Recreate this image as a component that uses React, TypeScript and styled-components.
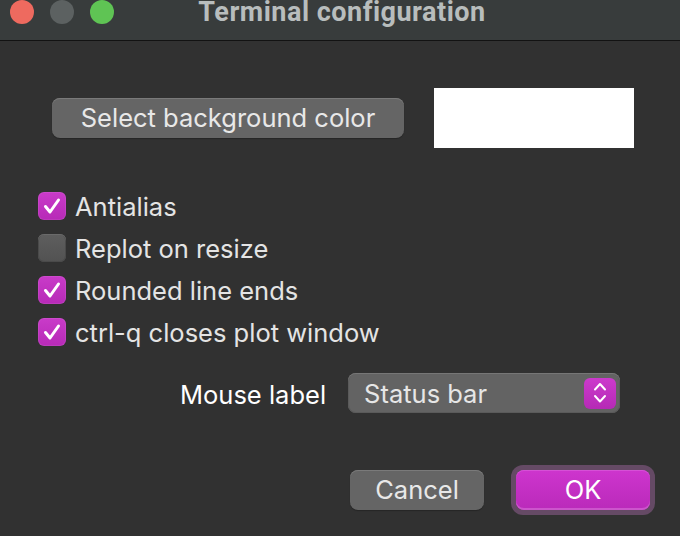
import React, { useState } from "react";
import styled, { createGlobalStyle } from "styled-components";

const Global = createGlobalStyle`
  html, body { margin: 0; padding: 0; background: #313131; }
  body { font-family: "Inter", "Liberation Sans", sans-serif; }
  * { box-sizing: border-box; }
`;

const Window = styled.div`
  width: 680px;
  height: 536px;
  background: #313131;
  display: flex;
  flex-direction: column;
  overflow: hidden;
`;

const TitleBar = styled.div`
  height: 41px;
  flex: none;
  background: #383c3c;
  border-bottom: 1px solid #121212;
  display: flex;
  align-items: flex-start;
  position: relative;
`;

const Lights = styled.div`
  display: flex;
  gap: 16px;
  padding-left: 10px;
`;

const Light = styled.span<{ $color: string }>`
  width: 24px;
  height: 24px;
  border-radius: 50%;
  background: ${(p) => p.$color};
`;

const Title = styled.div`
  position: absolute;
  left: 0;
  right: 0;
  top: 0;
  line-height: 24px;
  text-align: center;
  padding-left: 4px;
  font-family: "Roboto", "Liberation Sans", sans-serif;
  font-weight: 700;
  font-size: 27px;
  color: #b8bdbd;
  letter-spacing: 0.5px;
`;

const Content = styled.div`
  display: flex;
  flex-direction: column;
`;

const ColorRow = styled.div`
  display: flex;
  align-items: center;
  gap: 30px;
  padding-left: 52px;
  margin-top: 47px;
  height: 60px;
`;

const PushButton = styled.button<{ $width: number }>`
  width: ${(p) => p.$width}px;
  height: 40px;
  border-radius: 8px;
  border: none;
  background: #656565;
  box-shadow: inset 0 1px 0 #7a7a7a, 0 1px 1px rgba(0, 0, 0, 0.25);
  color: #e8e8e8;
  font-family: "Inter", "Liberation Sans", sans-serif;
  font-size: 25.5px;
  padding: 0;
  padding-bottom: 1px;
  display: flex;
  align-items: center;
  justify-content: center;
`;

const Swatch = styled.div`
  width: 200px;
  height: 60px;
  background: #ffffff;
`;

const CheckList = styled.div`
  display: flex;
  flex-direction: column;
  gap: 14px;
  padding-left: 38px;
  margin-top: 44px;
`;

const CheckRow = styled.label`
  display: flex;
  align-items: center;
  gap: 9px;
  height: 28px;
  color: #e4e4e4;
  font-size: 25.5px;
  cursor: default;
`;

const Box = styled.span<{ $on: boolean }>`
  width: 28px;
  height: 28px;
  border-radius: 6px;
  flex: none;
  display: flex;
  align-items: center;
  justify-content: center;
  background: ${(p) =>
    p.$on
      ? "linear-gradient(#c93bc9, #b72ab7)"
      : "linear-gradient(#5e5e5e, #525252)"};
  box-shadow: ${(p) =>
    p.$on
      ? "inset 0 0 0 1px rgba(255,255,255,0.08)"
      : "inset 0 1px 0 #6a6a6a, inset 0 0 0 1px #4a4a4a"};
`;

const MouseRow = styled.div`
  display: flex;
  align-items: center;
  gap: 22px;
  padding-left: 180px;
  margin-top: 27px;
`;

const FieldLabel = styled.span`
  color: #ffffff;
  font-size: 25.5px;
  padding-top: 2px;
`;

const Select = styled.div`
  width: 272px;
  height: 40px;
  border-radius: 8px;
  background: #636363;
  box-shadow: inset 0 1px 0 #767676, inset 0 0 0 1px #5a5a5a;
  display: flex;
  align-items: center;
  justify-content: space-between;
  padding: 0 4px 0 16px;
  color: #e6e6e6;
  font-size: 25.5px;
`;

const Stepper = styled.span`
  width: 32px;
  height: 31px;
  border-radius: 6px;
  background: linear-gradient(#cc3acc, #b52ab5);
  display: flex;
  align-items: center;
  justify-content: center;
`;

const ButtonRow = styled.div`
  display: flex;
  justify-content: flex-end;
  gap: 32px;
  padding-right: 30px;
  margin-top: 57px;
`;

const Focus = styled.span`
  padding: 5px;
  margin: -5px;
  border-radius: 12px;
  background: #654a65;
  display: flex;
`;

const PrimaryButton = styled.button`
  width: 134px;
  height: 40px;
  border-radius: 8px;
  border: none;
  background: linear-gradient(#ce35ce, #ba2aba);
  box-shadow: inset 0 -2px 0 #cc55cc, inset 0 1px 0 #d650d6;
  color: #ffffff;
  font-family: "Inter", "Liberation Sans", sans-serif;
  font-size: 25.5px;
  padding: 0;
  padding-bottom: 1px;
`;

const options = [
  { label: "Antialias", on: true },
  { label: "Replot on resize", on: false },
  { label: "Rounded line ends", on: true },
  { label: "ctrl-q closes plot window", on: true },
];

export default function App() {
  const [checks] = useState(options);
  return (
    <>
      <Global />
      <Window>
        <TitleBar>
          <Lights>
            <Light $color="#ee6a5f" />
            <Light $color="#5c6161" />
            <Light $color="#5fc454" />
          </Lights>
          <Title>Terminal configuration</Title>
        </TitleBar>
        <Content>
          <ColorRow>
            <PushButton $width={352}>Select background color</PushButton>
            <Swatch />
          </ColorRow>
          <CheckList>
            {checks.map((c) => (
              <CheckRow key={c.label}>
                <Box $on={c.on}>
                  {c.on && (
                    <svg width="28" height="28" viewBox="0 0 28 28">
                      <path
                        d="M7.5 14.5 L12 20 L20.5 8"
                        fill="none"
                        stroke="#fff"
                        strokeWidth="3"
                        strokeLinecap="round"
                        strokeLinejoin="round"
                      />
                    </svg>
                  )}
                </Box>
                {c.label}
              </CheckRow>
            ))}
          </CheckList>
          <MouseRow>
            <FieldLabel>Mouse label</FieldLabel>
            <Select>
              Status bar
              <Stepper>
                <svg width="32" height="31" viewBox="0 0 32 31">
                  <path
                    d="M11 11.5 L16 6 L21 11.5 M11 18 L16 23.5 L21 18"
                    fill="none"
                    stroke="#fff"
                    strokeWidth="2"
                    strokeLinecap="round"
                    strokeLinejoin="round"
                  />
                </svg>
              </Stepper>
            </Select>
          </MouseRow>
          <ButtonRow>
            <PushButton $width={134}>Cancel</PushButton>
            <Focus>
              <PrimaryButton>OK</PrimaryButton>
            </Focus>
          </ButtonRow>
        </Content>
      </Window>
    </>
  );
}
